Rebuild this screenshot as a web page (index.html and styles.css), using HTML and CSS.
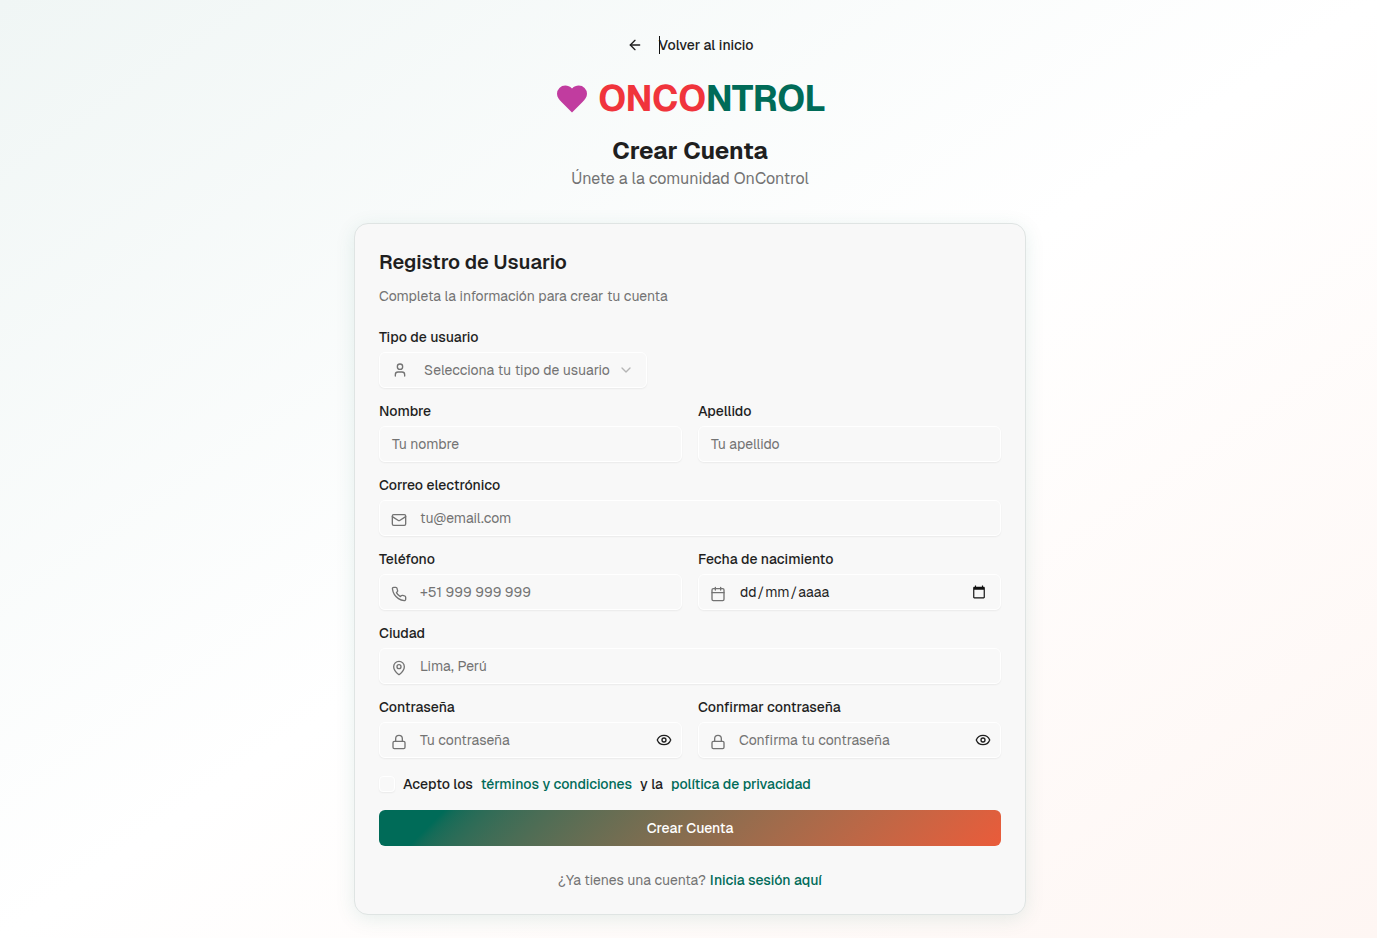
FILE: index.html
```html
<!DOCTYPE html>
<html lang="es">
<head>
<meta charset="utf-8">
<title>OnControl - Crear Cuenta</title>
<link rel="stylesheet" href="styles.css">
</head>
<body>
<main class="page">
  <header class="header">
    <a class="back"><svg class="icon" viewBox="0 0 24 24"><path d="m12 19-7-7 7-7"/><path d="M19 12H5"/></svg><span class="caret-text">Volver al inicio</span></a>
    <div class="brand">
      <svg class="heart" viewBox="0 0 24 24"><path d="M19 14c1.490-1.460 3-3.210 3-5.500A5.500 5.500 0 0 0 16.500 3c-1.760 0-3 .5-4.500 2-1.500-1.500-2.740-2-4.500-2A5.500 5.500 0 0 0 2 8.500c0 2.300 1.500 4.050 3 5.500l7 7Z"/></svg>
      <span class="brand-name"><span class="brand-red">ONCO</span><span class="brand-green">NTROL</span></span>
    </div>
    <h1 class="title">Crear Cuenta</h1>
    <p class="subtitle">Únete a la comunidad OnControl</p>
  </header>

  <section class="card">
    <h2 class="card-title">Registro de Usuario</h2>
    <p class="card-desc">Completa la información para crear tu cuenta</p>
    <form class="form">
      <div class="field">
        <label class="label">Tipo de usuario</label>
        <div class="control select">
          <svg class="icon muted" viewBox="0 0 24 24"><path d="M19 21v-2a4 4 0 0 0-4-4H9a4 4 0 0 0-4 4v2"/><circle cx="12" cy="7" r="4"/></svg>
          <span class="hint">Selecciona tu tipo de usuario</span>
          <svg class="icon chevron" viewBox="0 0 24 24"><path d="m6 9 6 6 6-6"/></svg>
        </div>
      </div>
      <div class="row">
        <div class="field"><label class="label">Nombre</label><div class="control"><span class="hint">Tu nombre</span></div></div>
        <div class="field"><label class="label">Apellido</label><div class="control"><span class="hint">Tu apellido</span></div></div>
      </div>
      <div class="field">
        <label class="label">Correo electrónico</label>
        <div class="control with-icon"><svg class="icon muted" viewBox="0 0 24 24"><path d="m22 7-8.991 5.727a2 2 0 0 1-2.009 0L2 7"/><rect x="2" y="4" width="20" height="16" rx="2"/></svg><span class="hint">tu@email.com</span></div>
      </div>
      <div class="row">
        <div class="field"><label class="label">Teléfono</label>
          <div class="control with-icon"><svg class="icon muted" viewBox="0 0 24 24"><path d="M22 16.92v3a2 2 0 0 1-2.18 2 19.79 19.79 0 0 1-8.63-3.07 19.5 19.5 0 0 1-6-6 19.79 19.79 0 0 1-3.07-8.67A2 2 0 0 1 4.11 2h3a2 2 0 0 1 2 1.72 12.84 12.84 0 0 0 .7 2.81 2 2 0 0 1-.45 2.11L8.09 9.91a16 16 0 0 0 6 6l1.27-1.27a2 2 0 0 1 2.11-.45 12.84 12.84 0 0 0 2.81.7A2 2 0 0 1 22 16.92z"/></svg><span class="hint">+51 999 999 999</span></div>
        </div>
        <div class="field"><label class="label">Fecha de nacimiento</label>
          <div class="control with-icon"><svg class="icon muted" viewBox="0 0 24 24"><path d="M8 2v4M16 2v4"/><rect x="3" y="4" width="18" height="18" rx="2"/><path d="M3 10h18"/></svg><span class="date-text"><span>dd</span><span>/</span><span>mm</span><span>/</span><span>aaaa</span></span>
          <svg class="picker" viewBox="0 0 24 24"><path d="M20 3h-1V1h-2v2H7V1H5v2H4c-1.100 0-2 .9-2 2v16c0 1.100.9 2 2 2h16c1.100 0 2-.9 2-2V5c0-1.100-.9-2-2-2zm0 18H4V8h16v13z"/></svg></div>
        </div>
      </div>
      <div class="field">
        <label class="label">Ciudad</label>
        <div class="control with-icon"><svg class="icon muted" viewBox="0 0 24 24"><path d="M20 10c0 4.993-5.539 10.193-7.399 11.799a1 1 0 0 1-1.202 0C9.539 20.193 4 14.993 4 10a8 8 0 0 1 16 0"/><circle cx="12" cy="10" r="3"/></svg><span class="hint">Lima, Perú</span></div>
      </div>
      <div class="row">
        <div class="field"><label class="label">Contraseña</label>
          <div class="control with-icon"><svg class="icon muted" viewBox="0 0 24 24"><rect x="3" y="11" width="18" height="11" rx="2"/><path d="M7 11V7a5 5 0 0 1 10 0v4"/></svg><span class="hint">Tu contraseña</span><svg class="icon eye" viewBox="0 0 24 24"><path d="M2.062 12.348a1 1 0 0 1 0-.696 10.750 10.750 0 0 1 19.876 0 1 1 0 0 1 0 .696 10.750 10.750 0 0 1-19.876 0"/><circle cx="12" cy="12" r="3"/></svg></div>
        </div>
        <div class="field"><label class="label">Confirmar contraseña</label>
          <div class="control with-icon"><svg class="icon muted" viewBox="0 0 24 24"><rect x="3" y="11" width="18" height="11" rx="2"/><path d="M7 11V7a5 5 0 0 1 10 0v4"/></svg><span class="hint">Confirma tu contraseña</span><svg class="icon eye" viewBox="0 0 24 24"><path d="M2.062 12.348a1 1 0 0 1 0-.696 10.750 10.750 0 0 1 19.876 0 1 1 0 0 1 0 .696 10.750 10.750 0 0 1-19.876 0"/><circle cx="12" cy="12" r="3"/></svg></div>
        </div>
      </div>
      <div class="terms"><i class="check"></i><span>Acepto los</span><a class="link">términos y condiciones</a><span>y la</span><a class="link">política de privacidad</a></div>
      <button type="button" class="submit">Crear Cuenta</button>
    </form>
    <p class="login"><span>¿Ya tienes una cuenta?</span><a class="link">Inicia sesión aquí</a></p>
  </section>
</main>
</body>
</html>
```
FILE: styles.css
```css
* { box-sizing: border-box; margin: 0; }
body {
  font: 400 14px/20px Geist, Inter, sans-serif;
  color: #1f1f1f;
}
.page {
  height: 938px;
  overflow: hidden;
  display: flex;
  flex-direction: column;
  align-items: center;
  background: linear-gradient(to bottom right, #f0f6f5 0%, #ffffff 50%, #fef6f3 100%);
}
.header { width: 672px; margin-left: 3px; display: flex; flex-direction: column; align-items: center; padding-top: 27px; }
.back { display: flex; align-items: center; gap: 16px; height: 36px; font-weight: 500; }
/* Text cursor resting before the first letter */
.caret-text { position: relative; }
.caret-text::before { content: ""; position: absolute; left: 0; top: 1px; width: 1px; height: 18px; background: #111; }
.icon { width: 16px; height: 16px; flex: none; fill: none; stroke: currentColor; stroke-width: 2; stroke-linecap: round; stroke-linejoin: round; }
.muted { color: #737373; }
.brand { display: flex; align-items: center; gap: 8px; height: 40px; margin-top: 16px; }
.heart { width: 36px; height: 36px; fill: #c13c9f; }
.brand-name { font-size: 36px; line-height: 40px; font-weight: 700; }
.brand-red { color: #f0343c; }
.brand-green { color: #006b58; }
.title { font-size: 24px; line-height: 32px; font-weight: 700; margin-top: 16px; }
.subtitle { font-size: 16px; line-height: 24px; color: #737373; }
.card {
  width: 672px;
  height: 692px;
  margin: 32px 0 0 3px;
  flex: none;
  padding: 24px;
  background: #f8f8f8;
  border: 1px solid #dfe4e3;
  border-radius: 14px;
  box-shadow: 0 4px 20px rgba(0, 107, 88, .1);
}
.card-title { font-size: 20px; line-height: 28px; font-weight: 600; }
.card-desc { margin-top: 10px; color: #737373; }
.form { display: flex; flex-direction: column; gap: 16px; margin-top: 24px; }
.field { display: flex; flex-direction: column; gap: 8px; }
.label { height: 14px; line-height: 14px; font-weight: 500; }
.row { display: grid; grid-template-columns: 1fr 1fr; gap: 16px; }
.control {
  display: flex;
  align-items: center;
  height: 36px;
  padding: 0 12px;
  border: 1px solid #fff;
  border-radius: 6px;
  box-shadow: 0 1px 2px rgba(0, 0, 0, .06);
}
.with-icon > .muted { margin-top: 3px; margin-left: -1px; margin-right: 13px; }
.select { width: 268px; }
.select .muted { margin-right: 16px; }
.chevron { color: #b5b5b5; margin-left: auto; }
.hint { color: #737373; white-space: nowrap; }
.date-text { display: flex; gap: 1px; padding-left: 1px; }
.picker { width: 14px; height: 14px; margin-left: auto; margin-right: 2px; fill: #111; }
.eye { margin-left: auto; margin-right: -3px; }
.terms { display: flex; align-items: center; height: 20px; gap: 8px; font-weight: 500; }
.check { width: 16px; height: 16px; border: 1px solid #fff; border-radius: 4px; box-shadow: 0 1px 2px rgba(0, 0, 0, .06); }
.link { color: #006b58; font-weight: 500; }
.submit {
  height: 36px;
  border: 0;
  border-radius: 6px;
  background: linear-gradient(135deg in oklab, #006b58 10%, #ea5b3a 100%);
  color: #fff;
  font: 500 14px/20px Geist, Inter, sans-serif;
}
.login { display: flex; justify-content: center; gap: 4px; margin-top: 24px; color: #737373; }
```
